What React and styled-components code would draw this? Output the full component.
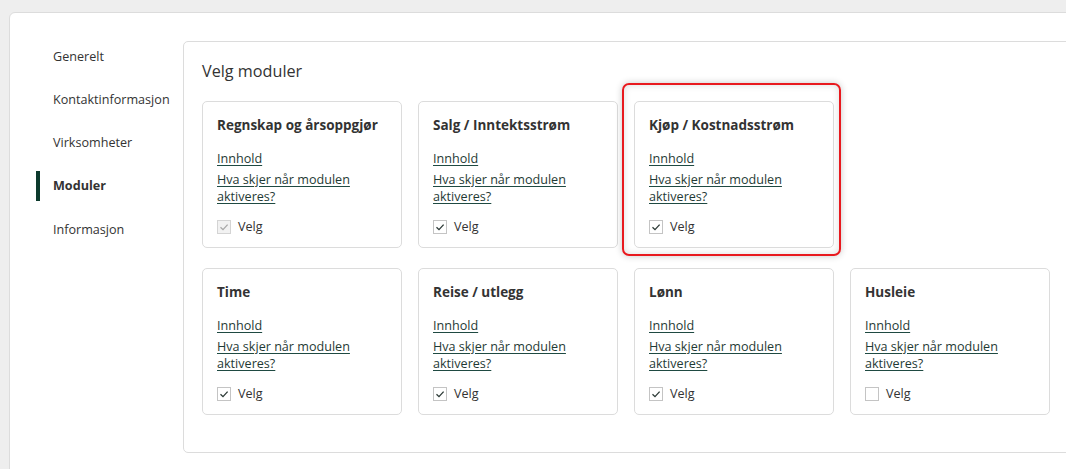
import React from "react";
import styled, { createGlobalStyle } from "styled-components";

const GlobalStyle = createGlobalStyle`
  html, body {
    margin: 0;
    padding: 0;
    background: #eeeeee;
    overflow: hidden;
  }
  body {
    font-family: "Open Sans", "Liberation Sans", sans-serif;
    color: #333;
  }
`;

const MENU = [
  { label: "Generelt" },
  { label: "Kontaktinformasjon" },
  { label: "Virksomheter" },
  { label: "Moduler", active: true },
  { label: "Informasjon" },
];

const ROWS = [
  [
    { title: "Regnskap og årsoppgjør", checked: true, disabled: true },
    { title: "Salg / Inntektsstrøm", checked: true },
    { title: "Kjøp / Kostnadsstrøm", checked: true, marked: true },
  ],
  [
    { title: "Time", checked: true },
    { title: "Reise / utlegg", checked: true },
    { title: "Lønn", checked: true },
    { title: "Husleie", checked: false },
  ],
];

const App = () => {
  return (
    <>
      <GlobalStyle />
      <Page>
        <Panel>
          <Sidebar>
            {MENU.map((m) => (
              <MenuItem key={m.label} $active={m.active}>
                {m.label}
              </MenuItem>
            ))}
          </Sidebar>
          <Content>
            <Heading>Velg moduler</Heading>
            <Rows>
              {ROWS.map((row, i) => (
                <Row key={i}>
                  {row.map((c) => (
                    <Card key={c.title}>
                      {c.marked && <Highlight />}
                      <Title>{c.title}</Title>
                      <Links>
                        <Link href="#">Innhold</Link>
                        <Link href="#">Hva skjer når modulen aktiveres?</Link>
                      </Links>
                      <CheckRow>
                        <Box $disabled={c.disabled}>
                          {c.checked && (
                            <svg width="10" height="10" viewBox="0 0 10 10">
                              <path
                                d="M1.5 5.2 L4 7.6 L8.6 2.6"
                                fill="none"
                                stroke={c.disabled ? "#a8a8a8" : "#2c3a36"}
                                strokeWidth="1.3"
                              />
                            </svg>
                          )}
                        </Box>
                        <CheckLabel>Velg</CheckLabel>
                      </CheckRow>
                    </Card>
                  ))}
                </Row>
              ))}
            </Rows>
          </Content>
        </Panel>
      </Page>
    </>
  );
};

export default App;

const Page = styled.div`
  padding: 12px 0 0 9px;
  min-height: 469px;
  box-sizing: border-box;
`;

const Panel = styled.div`
  width: 1120px;
  min-height: 480px;
  background: #fff;
  border: 1px solid #dcdcdc;
  border-radius: 6px;
  display: flex;
  padding-top: 28px;
  box-sizing: border-box;
`;

const Sidebar = styled.nav`
  width: 173px;
  flex-shrink: 0;
  padding-left: 26px;
  box-sizing: border-box;
  display: flex;
  flex-direction: column;
  gap: 13.3px;
`;

const MenuItem = styled.div`
  height: 30px;
  display: flex;
  align-items: center;
  padding-left: 13px;
  border-left: 4px solid ${(p) => (p.$active ? "#0d3a2d" : "transparent")};
  font-size: 12.6px;
  font-weight: ${(p) => (p.$active ? 700 : 400)};
  color: #333;
`;

const Content = styled.section`
  flex: 1;
  border: 1px solid #dcdcdc;
  border-radius: 5px;
  padding: 17px 18px 37px;
  align-self: flex-start;
`;

const Heading = styled.h2`
  margin: 0 0 18px;
  font-size: 16.2px;
  font-weight: 400;
  line-height: 24px;
  color: #333;
`;

const Rows = styled.div`
  display: flex;
  flex-direction: column;
  gap: 20px;
`;

const Row = styled.div`
  display: flex;
  gap: 16px;
`;

const Card = styled.div`
  position: relative;
  width: 200px;
  height: 147px;
  box-sizing: border-box;
  border: 1px solid #dcdcdc;
  border-radius: 5px;
  padding: 13px 14px 12px;
  background: #fff;
`;

const Highlight = styled.div`
  position: absolute;
  top: -19px;
  left: -13px;
  right: -8px;
  bottom: -9px;
  border: 2px solid #e8191e;
  border-radius: 7px;
  box-shadow: 0 0 7px rgba(0, 0, 0, 0.22), inset 0 0 7px rgba(0, 0, 0, 0.14);
  pointer-events: none;
`;

const Title = styled.div`
  font-size: 13.5px;
  font-weight: 700;
  line-height: 20px;
  color: #333;
  margin-bottom: 15px;
`;

const Links = styled.div`
  display: flex;
  flex-direction: column;
  gap: 3px;
`;

const Link = styled.a`
  font-size: 12.6px;
  line-height: 17.5px;
  color: #1f3a35;
  text-decoration: underline;
  text-decoration-color: #1f4a42;
  text-underline-offset: 2px;
  padding-right: 24px;
`;

const CheckRow = styled.div`
  display: flex;
  align-items: center;
  gap: 7px;
  margin-top: 14px;
  height: 14px;
`;

const Box = styled.span`
  width: 14px;
  height: 14px;
  box-sizing: border-box;
  border: 1px solid ${(p) => (p.$disabled ? "#d4d4d4" : "#c4c4c4")};
  background: ${(p) => (p.$disabled ? "#f2f2f2" : "#fff")};
  display: flex;
  align-items: center;
  justify-content: center;
`;

const CheckLabel = styled.span`
  font-size: 12.6px;
  color: #333;
`;
